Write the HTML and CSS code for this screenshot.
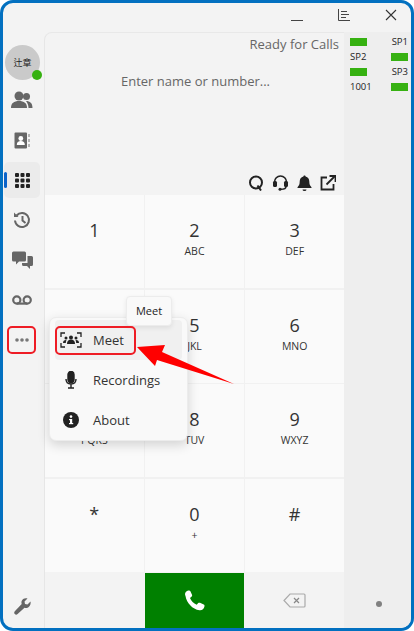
FILE: index.html
```html
<!DOCTYPE html>
<html lang="en">
<head>
    <meta charset="UTF-8">
    <title>Dialer</title>
    <link rel="stylesheet" href="styles.css">
</head>
<body>
    <div class="window">
        <div class="titlebar">
            <svg class="win-icon" width="14" height="14" viewBox="0 0 14 14"><path d="M1 12.500h12" stroke="#444" fill="none"/></svg>
            <svg class="win-icon" width="14" height="14" viewBox="0 0 14 14"><path d="M1.500 1v11.500H13M4 3.500h6M4 6.500h8M4 9.500h5" stroke="#444" fill="none"/></svg>
            <svg class="win-icon" width="14" height="14" viewBox="0 0 14 14"><path d="M2 2l10 10M12 2L2 12" stroke="#333" stroke-width="1.100" fill="none"/></svg>
        </div>
        <div class="body">
            <div class="sidebar">
                <div class="avatar">
                    <span>辻章</span>
                    <i class="online"></i>
                </div>
                <div class="nav-item">
                    <svg width="22" height="18" viewBox="0 0 22 18" fill="#666"><circle cx="8" cy="5" r="4.500"/><circle cx="15.500" cy="5.500" r="3.500"/><path d="M0 17c0-5 3-7 8-7s8 2 8 7z"/><path d="M15 10c4 0 6.500 2 6.500 7H17.500c0-3-1-5-2.500-7z"/></svg>
                </div>
                <div class="nav-item">
                    <svg width="16" height="17" viewBox="0 0 16 17"><path d="M1.500 0.500H12a1 1 0 0 1 1 1v14a1 1 0 0 1-1 1H1.500a1 1 0 0 1-1-1v-14a1 1 0 0 1 1-1z" fill="#666"/><circle cx="6.800" cy="6.500" r="2.400" fill="#fff"/><path d="M2.800 13c0-3 1.500-4 4-4s4 1 4 4z" fill="#fff"/><path d="M15 2v3M15 7v3M15 12v3" stroke="#777" fill="none"/></svg>
                </div>
                <div class="nav-item active">
                    <i class="marker"></i>
                    <svg width="15" height="15" viewBox="0 0 15 15" fill="#222"><rect x="0" y="0" width="4" height="4" rx="1"/><rect x="5.500" y="0" width="4" height="4" rx="1"/><rect x="11" y="0" width="4" height="4" rx="1"/><rect x="0" y="5.500" width="4" height="4" rx="1"/><rect x="5.500" y="5.500" width="4" height="4" rx="1"/><rect x="11" y="5.500" width="4" height="4" rx="1"/><rect x="0" y="11" width="4" height="4" rx="1"/><rect x="5.500" y="11" width="4" height="4" rx="1"/><rect x="11" y="11" width="4" height="4" rx="1"/></svg>
                </div>
                <div class="nav-item">
                    <svg width="18" height="18" viewBox="0 0 18 18" fill="none" stroke="#666" stroke-width="2"><path d="M3.600 4.500A7 7 0 1 1 2 9.500"/><path d="M9.500 5v4.500l3 2.500"/><path d="M1 1.500v4.500h4.500z" fill="#666" stroke="none"/></svg>
                </div>
                <div class="nav-item">
                    <svg width="21" height="18" viewBox="0 0 21 18" fill="#666"><path d="M1.500 0.500h11a1.500 1.500 0 0 1 1.500 1.500v7a1.500 1.500 0 0 1-1.500 1.500H7l-3 3v-3H1.500A1.500 1.500 0 0 1 0 9V2A1.500 1.500 0 0 1 1.500 0.500z"/><path d="M15.500 5h4a1.500 1.500 0 0 1 1.500 1.500v7a1.500 1.500 0 0 1-1.500 1.500H18v3l-3-3h-3.500a1.500 1.500 0 0 1-1.500-1.500V12h5.500z"/></svg>
                </div>
                <div class="nav-item">
                    <svg width="20" height="10" viewBox="0 0 20 10" fill="none" stroke="#666" stroke-width="2.200"><circle cx="4.800" cy="5" r="3.600"/><circle cx="15.200" cy="5" r="3.600"/><path d="M4.800 8.600h10.400"/></svg>
                </div>
                <div class="nav-item">
                    <svg width="14" height="4" viewBox="0 0 14 4" fill="#777"><circle cx="2" cy="2" r="1.800"/><circle cx="7" cy="2" r="1.800"/><circle cx="12" cy="2" r="1.800"/></svg>
                </div>
                <div class="nav-spacer"></div>
                <div class="nav-item tool">
                    <svg width="17" height="17" viewBox="0 0 17 17" fill="#666"><path d="M16.500 3.500l-3 3-2.500-.5-.5-2.500 3-3c-2.500-.8-5.500.5-6 3-.2 1 0 1.800.2 2.500L0.800 13.300c-.8.800-.8 2 0 2.800s2 .8 2.800 0L10.500 9.800c.8.300 1.700.4 2.500.2 2.500-.5 4.200-3.500 3.500-6.500z"/></svg>
                </div>
            </div>

            <div class="main">
                <div class="dial-head">
                    <div class="status">Ready for Calls</div>
                    <div class="number">Enter name or number...</div>
                    <div class="head-icons">
                        <svg width="16" height="16" viewBox="0 0 16 16" fill="none" stroke="#222" stroke-width="2"><circle cx="8" cy="7.500" r="6"/><path d="M9.500 10.500l3.500 5"/></svg>
                        <svg width="17" height="17" viewBox="0 0 17 17" fill="none" stroke="#222" stroke-width="1.600"><path d="M2.500 9V8a6 6 0 0 1 12 0v1"/><rect x="1" y="7" width="4" height="6" rx="1.500" fill="#222" stroke="none"/><rect x="12" y="7" width="4" height="6" rx="1.500" fill="#222" stroke="none"/><path d="M14 12.500c0 2-2 2.800-5 2.800"/><circle cx="8" cy="15.300" r="1.500" fill="#222" stroke="none"/></svg>
                        <svg width="15" height="16" viewBox="0 0 15 16" fill="#222"><path d="M7.500 0.500c.7 0 1.100.5 1.100 1.100 2.400.5 3.700 2.400 3.700 5 0 3 .8 4.200 2.200 5.600v.8H.5v-.8c1.400-1.400 2.200-2.600 2.200-5.600 0-2.600 1.300-4.500 3.700-5 0-.6.400-1.100 1.100-1.100z"/><path d="M5.500 14.500h4a2 1.500 0 0 1-4 0z"/></svg>
                        <svg width="16" height="16" viewBox="0 0 16 16" fill="none" stroke="#222" stroke-width="1.800"><path d="M7 2.500H1.500v12h12V9"/><path d="M6.500 9.500L14.500 1.500"/><path d="M9.500 1h6v6"/></svg>
                    </div>
                </div>
                <div class="keypad">
                    <div class="key"><b>1</b></div>
                    <div class="key"><b>2</b><small>ABC</small></div>
                    <div class="key"><b>3</b><small>DEF</small></div>
                    <div class="key"><b>4</b><small>GHI</small></div>
                    <div class="key"><b>5</b><small>JKL</small></div>
                    <div class="key"><b>6</b><small>MNO</small></div>
                    <div class="key"><b>7</b><small>PQRS</small></div>
                    <div class="key"><b>8</b><small>TUV</small></div>
                    <div class="key"><b>9</b><small>WXYZ</small></div>
                    <div class="key"><b>*</b></div>
                    <div class="key"><b>0</b><small>+</small></div>
                    <div class="key"><b>#</b></div>
                </div>
                <div class="call-row">
                    <div></div>
                    <div class="call-btn">
                        <svg width="21" height="21" viewBox="0 0 21 21" fill="#fff"><path d="M4.500 0.500c.8-.3 1.500 0 1.900.7L8 4.800c.3.600.2 1.200-.3 1.700L6 8c1 2.700 3.700 5.500 6.700 6.800l1.500-1.700c.5-.5 1.200-.6 1.800-.3l3.700 1.700c.7.400 1 1 .8 1.800-.6 2.900-2.500 4.300-5 4-7-1-13-7.500-14-14.300C.3 3.200 1.800 1.200 4.500 0.500z"/></svg>
                    </div>
                    <div class="back-btn">
                        <svg width="23" height="15" viewBox="0 0 23 15" fill="none" stroke="#aaa" stroke-width="1.200"><path d="M7 1h14a1 1 0 0 1 1 1v11a1 1 0 0 1-1 1H7L1 7.500z"/><path d="M11 5l5 5M16 5l-5 5" stroke="#888"/></svg>
                    </div>
                </div>
            </div>

            <div class="lines">
                <div class="line-grid">
                    <i class="bar"></i><span class="right">SP1</span>
                    <span>SP2</span><i class="bar right"></i>
                    <i class="bar"></i><span class="right">SP3</span>
                    <span>1001</span><i class="bar right"></i>
                </div>
                <i class="dot"></i>
            </div>
        </div>

        <div class="menu">
            <div class="menu-item hover">
                <svg width="22" height="16" viewBox="0 0 22 16" fill="none" stroke="#222" stroke-width="1.300"><path d="M1 5V1h4M17 1h4v4M1 11v4h4M17 15h4v-4"/><g fill="#222" stroke="none"><circle cx="11" cy="5.500" r="2"/><circle cx="6" cy="6" r="1.500"/><circle cx="16" cy="6" r="1.500"/><path d="M7 12c0-3 1.500-4.500 4-4.500s4 1.500 4 4.500z"/><path d="M3 11c0-2 1-3 3-3l.5.200C6 9 5.800 10 5.800 11zM19 11c0-2-1-3-3-3l-.5.200c.5.800.7 1.800.7 2.800z"/></g></svg>
                <span>Meet</span>
            </div>
            <div class="menu-item">
                <svg width="22" height="18" viewBox="0 0 22 18" fill="none" stroke="#222" stroke-width="1.400"><rect x="8" y="0.500" width="6" height="11" rx="3" fill="#222"/><path d="M6 8c0 3 2 5 5 5s5-2 5-5M11 13v4M8 17h6"/></svg>
                <span>Recordings</span>
            </div>
            <div class="menu-item">
                <svg width="22" height="16" viewBox="0 0 22 16"><circle cx="11" cy="8" r="8" fill="#222"/><rect x="10" y="7" width="2.200" height="5" fill="#fff"/><rect x="9" y="7" width="2" height="1.200" fill="#fff"/><rect x="9" y="11" width="4.200" height="1.200" fill="#fff"/><circle cx="11" cy="4.600" r="1.300" fill="#fff"/></svg>
                <span>About</span>
            </div>
        </div>
        <div class="tooltip">Meet</div>

        <div class="mark mark-more"></div>
        <div class="mark mark-meet"></div>
        <svg class="arrow" width="102" height="46" viewBox="0 0 102 46"><path d="M0 4L28 2L25 9L97 41L20 17L18 23z" fill="#f00"/></svg>
    </div>
</body>
</html>
```

FILE: styles.css
```css
html, body {
    margin: 0;
    padding: 0;
    background: #fff;
}
.window {
    position: relative;
    width: 414px;
    height: 631px;
    box-sizing: border-box;
    border: 3px solid #0270c0;
    border-radius: 13px;
    background: #f3f3f3;
    font-family: "Open Sans", "Noto Sans", sans-serif;
    overflow: hidden;
    display: flex;
    flex-direction: column;
}
.titlebar {
    height: 29px;
    flex: none;
    box-sizing: border-box;
    display: flex;
    justify-content: flex-end;
    align-items: center;
    gap: 33px;
    padding: 0 13px 5px 0;
}
.win-icon {
    flex: none;
}
.body {
    flex: 1;
    display: flex;
    min-height: 0;
}

/* left nav */
.sidebar {
    width: 41px;
    flex: none;
    display: flex;
    flex-direction: column;
    align-items: flex-start;
    gap: 4px;
    padding-top: 13px;
    box-sizing: border-box;
}
.avatar {
    position: relative;
    width: 35px;
    height: 35px;
    flex: none;
    margin-left: 2px;
    margin-bottom: -2px;
    border-radius: 50%;
    background: #cacaca;
    display: flex;
    align-items: center;
    justify-content: center;
    font-family: "Noto Sans CJK JP", sans-serif;
    font-size: 9px;
    color: #222;
}
.online {
    position: absolute;
    right: -2px;
    bottom: 0;
    width: 10px;
    height: 10px;
    border-radius: 50%;
    background: #36b111;
}
.nav-item {
    position: relative;
    width: 36px;
    height: 36px;
    margin-left: 1px;
    display: flex;
    align-items: center;
    justify-content: center;
    border-radius: 5px;
    flex: none;
}
.nav-item.active {
    background: #ebebeb;
}
.marker {
    position: absolute;
    left: 0;
    top: 10px;
    width: 3px;
    height: 16px;
    border-radius: 2px;
    background: #0a63c9;
}
.nav-spacer {
    flex: 1;
}
.nav-item.tool {
    margin-bottom: 4px;
}

/* dial area */
.main {
    width: 300px;
    flex: none;
    display: flex;
    flex-direction: column;
    border-left: 1px solid #e6e6e6;
    border-top: 1px solid #e8e8e8;
    border-top-left-radius: 8px;
    box-sizing: border-box;
    overflow: hidden;
}
.dial-head {
    height: 162px;
    flex: none;
    display: flex;
    flex-direction: column;
    box-sizing: border-box;
}
.status {
    text-align: right;
    font-size: 13px;
    color: #666;
    padding: 3px 5px 0 0;
    line-height: 17px;
}
.number {
    text-align: center;
    font-size: 13px;
    color: #666;
    line-height: 17px;
    margin-top: 20px;
    padding-left: 2px;
}
.head-icons {
    margin-top: auto;
    display: flex;
    justify-content: flex-end;
    align-items: center;
    gap: 8px;
    padding: 0 8px 4px 0;
}
.keypad {
    flex: none;
    display: grid;
    grid-template-columns: repeat(3, 1fr);
    grid-template-rows: repeat(4, 93px);
    gap: 1.500px;
    background: #f1f1f1;
}
.key {
    background: #fafafa;
    display: flex;
    flex-direction: column;
    align-items: center;
    padding-top: 23px;
    box-sizing: border-box;
    color: #333;
}
.key b {
    font-weight: 400;
    font-size: 18px;
    line-height: 24px;
}
.key small {
    font-size: 10.500px;
    line-height: 15px;
    margin-top: 2px;
    color: #333;
}
.call-row {
    flex: 1;
    display: grid;
    grid-template-columns: repeat(3, 1fr);
    gap: 1.500px;
    padding-top: 1px;
    min-height: 0;
}
.call-btn {
    background: #008000;
    display: flex;
    align-items: center;
    justify-content: center;
}
.back-btn {
    display: flex;
    align-items: center;
    justify-content: center;
}

/* line keys */
.lines {
    flex: 1;
    position: relative;
    background: #eeeeee;
    font-size: 9.500px;
    color: #222;
    padding: 1px 3px 0 6px;
}
.line-grid {
    display: grid;
    grid-template-columns: 1fr 1fr;
    grid-auto-rows: 15px;
    align-items: center;
    margin-top: 1px;
}
.line-grid .right {
    justify-self: end;
}
.bar {
    display: block;
    width: 17px;
    height: 8px;
    background: #36b111;
}
.dot {
    position: absolute;
    left: 32px;
    bottom: 21px;
    width: 6px;
    height: 6px;
    border-radius: 50%;
    background: #808080;
}

/* popup menu and callouts */
.tooltip {
    position: absolute;
    left: 123px;
    top: 293px;
    width: 46px;
    height: 30px;
    box-sizing: border-box;
    background: #f9f9f9;
    border: 1px solid #ececec;
    border-radius: 4px;
    font-size: 11px;
    line-height: 28px;
    text-align: center;
    color: #222;
    box-shadow: 0 2px 5px rgba(0, 0, 0, 0.08);
}
.menu {
    position: absolute;
    left: 46px;
    top: 314px;
    width: 139px;
    height: 124px;
    box-sizing: border-box;
    padding: 2px 5px;
    display: flex;
    flex-direction: column;
    background: #f9f9f9;
    border: 1px solid #ececec;
    border-radius: 7px;
    box-shadow: 0 4px 12px rgba(0, 0, 0, 0.16);
}
.menu-item {
    height: 40px;
    flex: none;
    display: flex;
    align-items: center;
    gap: 11px;
    padding-left: 5px;
    border-radius: 4px;
    font-size: 13px;
    color: #333;
}
.menu-item.hover {
    background: #f0f0f0;
}
.mark {
    position: absolute;
    box-sizing: border-box;
    border: 2px solid #ee1c25;
    border-radius: 5px;
}
.mark-more {
    left: 4px;
    top: 323px;
    width: 29px;
    height: 28px;
}
.mark-meet {
    left: 52px;
    top: 323px;
    width: 81px;
    height: 29px;
}
.arrow {
    position: absolute;
    left: 134px;
    top: 340px;
}
```
